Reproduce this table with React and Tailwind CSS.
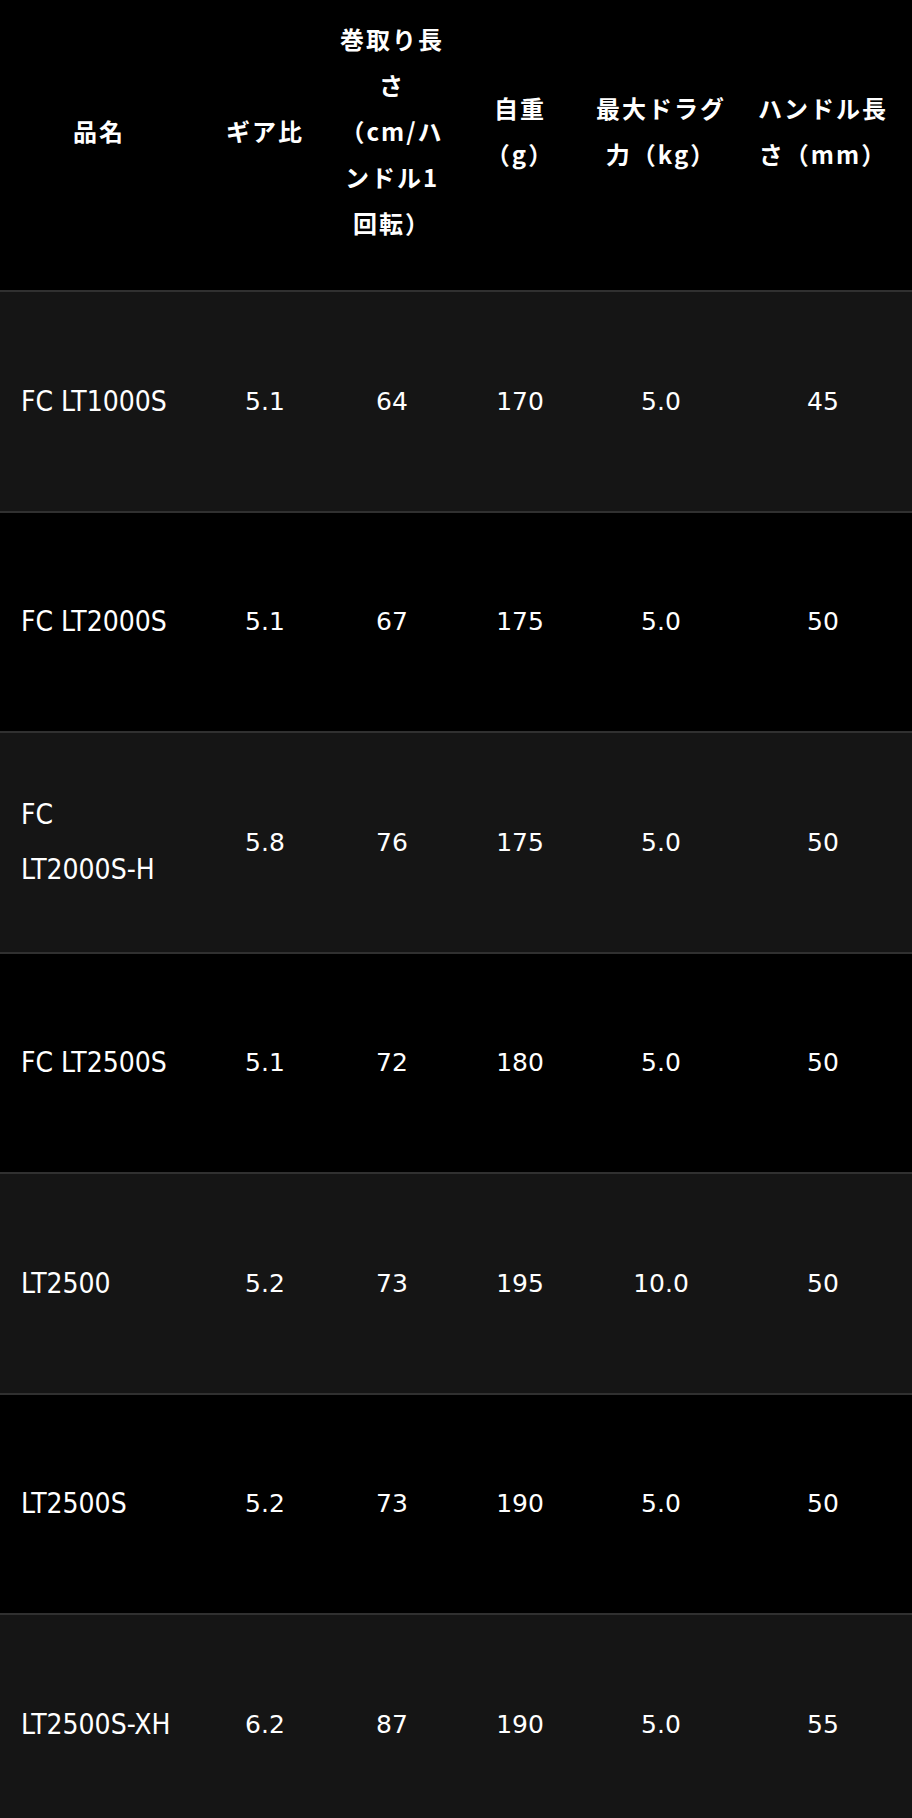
import React from 'react';

const COLS = 'grid grid-cols-[198px_134px_120px_136px_146px_178px]';

// header labels, split where the original table wraps them
const HEADERS = [
  ['品名'],
  ['ギア比'],
  ['巻取り長', 'さ', '（cm/ハ', 'ンドル1', '回転）'],
  ['自重', '（g）'],
  ['最大ドラグ', '力（kg）'],
  ['ハンドル長', 'さ（mm）'],
];

const ROWS = [
  [['FC LT1000S'], '5.1', '64', '170', '5.0', '45'],
  [['FC LT2000S'], '5.1', '67', '175', '5.0', '50'],
  [['FC', 'LT2000S-H'], '5.8', '76', '175', '5.0', '50'],
  [['FC LT2500S'], '5.1', '72', '180', '5.0', '50'],
  [['LT2500'], '5.2', '73', '195', '10.0', '50'],
  [['LT2500S'], '5.2', '73', '190', '5.0', '50'],
  [['LT2500S-XH'], '6.2', '87', '190', '5.0', '55'],
];

export default function App() {
  return (
    <div className="w-[912px] min-h-[1818px] bg-black text-white">
      {/* header */}
      <div className={`${COLS} h-[290px] pb-[28px]`}>
        {HEADERS.map((lines) => (
          <div key={lines[0]} className="flex items-center justify-center">
            <div className="text-center font-bold text-[24px] leading-[46px] tracking-[2px] font-['Noto_Sans_CJK_JP',sans-serif]">
              {lines.map((l) => (
                <div key={l} className="whitespace-nowrap">{l}</div>
              ))}
            </div>
          </div>
        ))}
      </div>

      {/* body */}
      {ROWS.map((r, i) => (
        <div
          key={r[0].join(' ')}
          className={`${COLS} h-[220.5px] border-t-2 border-[#303030] ${i % 2 === 0 ? 'bg-[#151515]' : 'bg-black'}`}
        >
          <div className="flex flex-col justify-center px-[21px]">
            {r[0].map((l) => (
              <div
                key={l}
                className="whitespace-nowrap text-[28px] leading-[55px] font-stretch-condensed font-['DejaVu_Sans_Condensed','DejaVu_Sans',sans-serif]"
              >
                {l}
              </div>
            ))}
          </div>
          {r.slice(1).map((v, j) => (
            <div
              key={j}
              className="flex items-center justify-center text-[25px] font-['DejaVu_Sans',sans-serif]"
            >
              {v}
            </div>
          ))}
        </div>
      ))}
    </div>
  );
}
